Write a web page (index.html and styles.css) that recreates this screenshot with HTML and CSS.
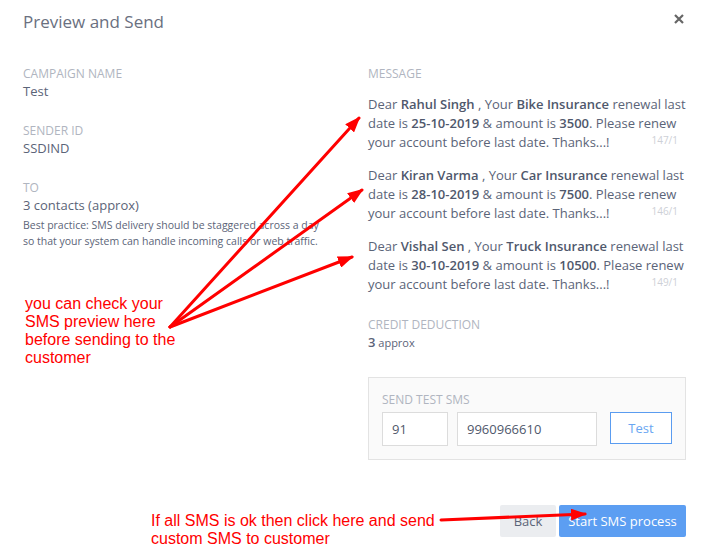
FILE: index.html
```html
<!DOCTYPE html>
<html lang="en">
<head>
    <meta charset="UTF-8">
    <meta name="viewport" content="width=device-width, initial-scale=1.0">
    <title>Preview and Send</title>
    <link rel="stylesheet" href="styles.css">
</head>
<body>
    <div class="modal">
        <div class="modal-header">
            <h2>Preview and Send</h2>
            <svg class="close" width="10" height="10" viewBox="0 0 10 10">
                <path d="M1 1 L9 9 M9 1 L1 9" stroke="#666" stroke-width="2.2"/>
            </svg>
        </div>

        <div class="modal-body">
            <div class="col-left">
                <div class="field">
                    <div class="label">Campaign Name</div>
                    <div class="value">Test</div>
                </div>
                <div class="field">
                    <div class="label">Sender ID</div>
                    <div class="value">SSDIND</div>
                </div>
                <div class="field">
                    <div class="label">To</div>
                    <div class="value">3 contacts (approx)</div>
                    <p class="hint">Best practice: SMS delivery should be staggered across a day so that your system can handle incoming calls or web traffic.</p>
                </div>
            </div>

            <div class="col-right">
                <div class="label">Message</div>
                <div class="messages">
                    <p class="msg">Dear <b>Rahul Singh</b> , Your <b>Bike Insurance</b> renewal last date is <b>25-10-2019</b> &amp; amount is <b>3500</b>. Please renew your account before last date. Thanks...!<span class="count">147/1</span></p>
                    <p class="msg">Dear <b>Kiran Varma</b> , Your <b>Car Insurance</b> renewal last date is <b>28-10-2019</b> &amp; amount is <b>7500</b>. Please renew your account before last date. Thanks...!<span class="count">146/1</span></p>
                    <p class="msg">Dear <b>Vishal Sen</b> , Your <b>Truck Insurance</b> renewal last date is <b>30-10-2019</b> &amp; amount is <b>10500</b>. Please renew your account before last date. Thanks...!<span class="count">149/1</span></p>
                </div>

                <div class="credit">
                    <div class="label">Credit Deduction</div>
                    <div class="credit-value"><b>3</b> approx</div>
                </div>

                <div class="test-box">
                    <div class="label">Send Test SMS</div>
                    <div class="test-row">
                        <input class="input code" type="text" value="91">
                        <input class="input phone" type="text" value="9960966610">
                        <button class="btn-test">Test</button>
                    </div>
                </div>
            </div>
        </div>

        <div class="modal-footer">
            <button class="btn btn-back">Back</button>
            <button class="btn btn-primary">Start SMS process</button>
        </div>
    </div>

    <!-- annotations drawn over the screenshot -->
    <div class="note note-preview">you can check your<br>SMS preview here<br>before sending to the<br>customer</div>
    <div class="note note-send">If all SMS is ok then click here and send<br>custom SMS to customer</div>

    <svg class="arrows" width="711" height="556" viewBox="0 0 711 556">
        <defs>
            <marker id="head" markerUnits="userSpaceOnUse" markerWidth="16" markerHeight="12" refX="14" refY="6" orient="auto">
                <path d="M0 0 L16 6 L0 12 Z" fill="#f00"/>
            </marker>
        </defs>
        <g stroke="#f00" stroke-width="3" stroke-linecap="round" fill="none">
            <line x1="170" y1="327" x2="359" y2="118" marker-end="url(#head)"/>
            <line x1="170" y1="327" x2="362" y2="190" marker-end="url(#head)"/>
            <line x1="170" y1="327" x2="352" y2="257" marker-end="url(#head)"/>
            <line x1="441" y1="520" x2="585" y2="514" marker-end="url(#head)"/>
        </g>
    </svg>
</body>
</html>
```

FILE: styles.css
```css
* { margin: 0; padding: 0; box-sizing: border-box; }
body {
    font-family: 'Open Sans', 'Noto Sans', sans-serif;
    background: #fff;
    color: #5b6478;
    width: 711px;
    height: 556px;
    position: relative;
    overflow: hidden;
}
.modal { padding: 12px 25px 0 23px; }
.modal-header {
    display: flex;
    justify-content: space-between;
    align-items: center;
    height: 20px;
}
.modal-header h2 {
    font-size: 17px;
    font-weight: 400;
    color: #6a7080;
    line-height: 20px;
}
.close { margin-right: 2px; margin-top: -6px; }

.modal-body {
    display: grid;
    grid-template-columns: 310px 318px;
    column-gap: 35px;
    margin-top: 34px;
}
.label {
    font-size: 12px;
    line-height: 16px;
    text-transform: uppercase;
    color: #b0b5c0;
}
.value { font-size: 13px; line-height: 18px; }
.field { margin-bottom: 23px; }
.hint {
    font-size: 10.5px;
    line-height: 16px;
    margin-top: 3px;
    width: 302px;
}

.messages { margin-top: 13px; }
.msg {
    font-size: 13px;
    line-height: 19px;
    margin-bottom: 14px;
}
.msg b { font-weight: 600; color: #4f586c; }
.msg .count {
    float: right;
    font-size: 10px;
    line-height: 15px;
    color: #cdd0d6;
    margin-right: 8px;
}

.credit { margin-top: 23px; }
.credit-value { font-size: 11px; line-height: 18px; }
.credit-value b { font-size: 13px; font-weight: 600; }

.test-box {
    margin-top: 25px;
    background: #fafafa;
    border: 1px solid #e3e3e3;
    padding: 14px 13px 13px 13px;
}
.test-box .label { margin-bottom: 4px; }
.test-row { display: flex; align-items: flex-start; }
.input {
    height: 34px;
    border: 1px solid #dcdcdc;
    background: #fff;
    font-family: inherit;
    font-size: 13px;
    color: #4f586c;
    padding: 0 9px;
    outline: none;
}
.code { width: 66px; margin-right: 9px; }
.phone { width: 140px; margin-right: 13px; }
.btn-test {
    width: 62px;
    height: 32px;
    border: 1px solid #5a9cf0;
    background: #fff;
    color: #6aa6f2;
    font-family: inherit;
    font-size: 13px;
}

.modal-footer {
    display: flex;
    justify-content: flex-end;
    gap: 3px;
    margin-top: 45px;
}
.btn {
    height: 32px;
    border: none;
    border-radius: 2px;
    font-family: inherit;
    font-size: 13px;
}
.btn-back { width: 56px; background: #ebedf0; color: #5b6478; }
.btn-primary { width: 127px; background: #5c9ef2; color: #fff; }

.note {
    position: absolute;
    font-family: 'Liberation Sans', Arial, sans-serif;
    font-size: 16px;
    line-height: 18px;
    color: #f00;
}
.note-preview { left: 25px; top: 295px; }
.note-send { left: 151px; top: 512px; }
.arrows { position: absolute; left: 0; top: 0; pointer-events: none; }
```
